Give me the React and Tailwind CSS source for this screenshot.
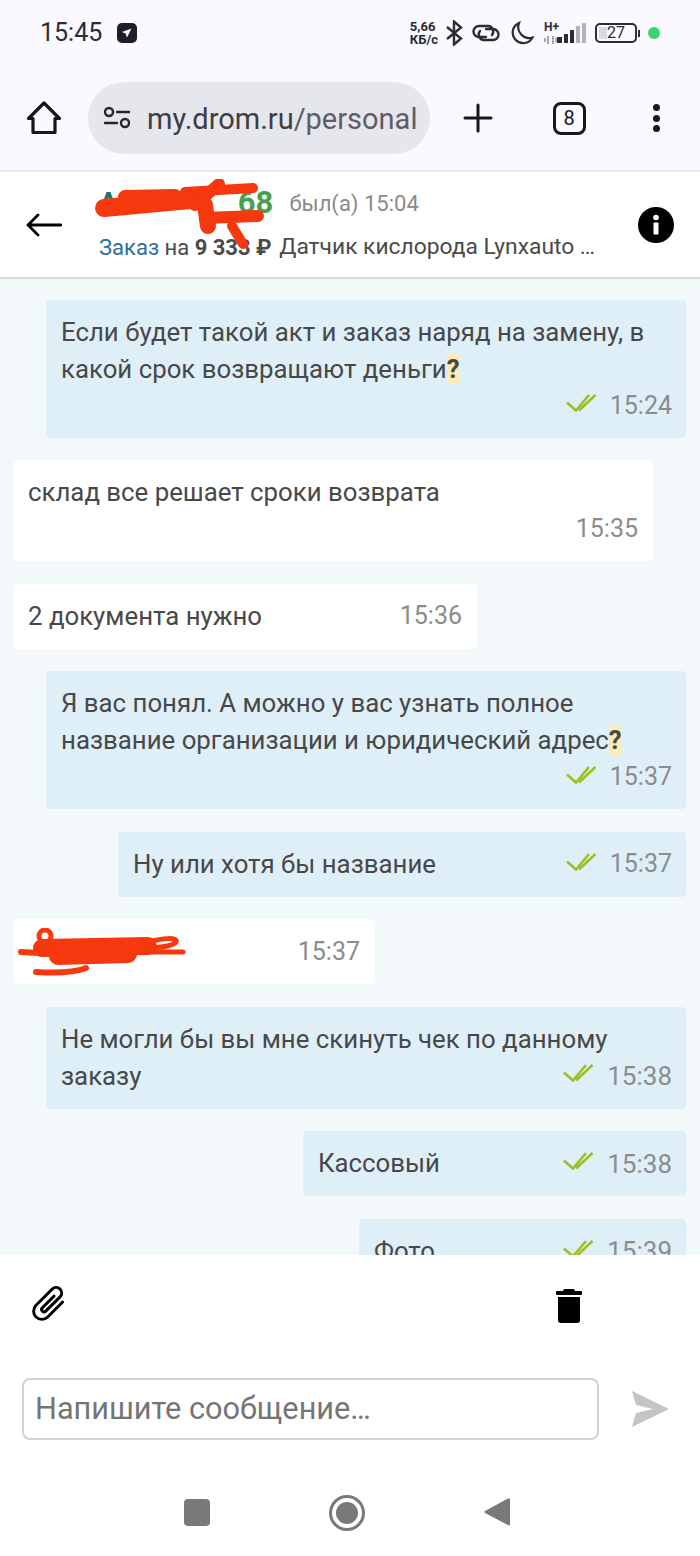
import React from "react";

const Checks = () => (
  <svg width="30" height="18" viewBox="0 0 30 18" fill="none" stroke="#9dbf1f" strokeWidth="2.6" className="-mt-[5px] shrink-0">
    <path d="M1 8.500l9 8L23 1" />
    <path d="M13 16.500L29.500 1" />
  </svg>
);

const Meta = ({ time, own = true, big = false, className = "" }) => (
  <div
    className={`flex items-center gap-[14px] leading-[36px] text-[#8c8c8c] ${
      big ? "text-[26px]" : "text-[25px]"
    } ${className}`}
  >
    {own && <Checks />}
    <span>{time}</span>
  </div>
);

const Q = () => <span className="bg-[#fdecb8] font-bold">?</span>;

const Bubble = ({ own = true, width, children }) => (
  <div
    className={`shrink-0 rounded-[4px] py-[14px] text-[25.8px] leading-[37px] text-[#484848] ${width} ${
      own ? "self-end bg-[#dfeff8] pl-[15px] pr-[14px]" : "self-start bg-white pl-[14px] pr-[15px]"
    }`}
  >
    {children}
  </div>
);

const Row = ({ text, time, own, big }) => (
  <div className="flex items-center justify-between">
    <span>{text}</span>
    <Meta time={time} own={own} big={big} />
  </div>
);

const StatusBar = () => (
  <div className="flex h-[70px] items-center justify-between pb-[4px] pl-[40px] pr-[40px] text-[#2b2d33]">
    <div className="flex items-center gap-[15px]">
      <span className="text-[25px]">15:45</span>
      <svg width="20" height="20" viewBox="0 0 20 20">
        <rect width="20" height="20" rx="5" fill="#1b1e2b" />
        <path d="M14.500 5.500L5 9l3.600 1.400L10 14.500z" fill="#fff" />
      </svg>
    </div>
    <div className="flex items-center">
      <div className="flex flex-col text-[13px] font-bold leading-[13px]">
        <span>5,66</span>
        <span>КБ/с</span>
      </div>
      <svg className="ml-[7px]" width="18" height="26" viewBox="0 0 18 26" fill="none" stroke="#2b2d33" strokeWidth="2.4">
        <path d="M2 7l14 11.500L9 24.500V1.500l7 6L2 19" />
      </svg>
      <svg className="ml-[8px]" width="30" height="22" viewBox="0 0 30 22" fill="none" stroke="#2b2d33" strokeWidth="2.4" strokeLinecap="round">
        <path d="M15 15H8a5.500 5.500 0 0 1 0-11H17a5.500 5.500 0 0 1 4 9" />
        <path d="M15 7h7a5.500 5.500 0 0 1 0 11H13a5.500 5.500 0 0 1-4-9" />
      </svg>
      <svg className="ml-[9px]" width="24" height="24" viewBox="0 0 24 24" fill="none" stroke="#2b2d33" strokeWidth="2.2">
        <path d="M9 2a10.500 10.500 0 1 0 13.500 14.500A11 11 0 0 1 9 2z" />
      </svg>
      <div className="ml-[10px] flex h-[22px] w-[14px] flex-col justify-between">
        <span className="text-[12px] font-bold leading-[10px]">H+</span>
        <svg width="14" height="8" viewBox="0 0 14 8" fill="#a9a9ae">
          <rect x="0" y="2" width="2" height="4" />
          <rect x="3" y="0" width="2" height="8" />
          <rect x="8" y="0" width="2" height="8" />
          <rect x="11" y="2" width="2" height="4" />
        </svg>
      </div>
      <svg className="ml-[-1px]" width="30" height="20" viewBox="0 0 30 20">
        <rect x="0" y="14" width="5" height="6" fill="#2b2d33" />
        <rect x="7" y="11" width="4" height="9" fill="#2b2d33" />
        <rect x="13" y="7" width="4" height="13" fill="#2b2d33" />
        <rect x="19" y="3" width="4" height="17" fill="#b4b4b8" />
        <rect x="25" y="0" width="4" height="20" fill="#b4b4b8" />
      </svg>
      <div className="ml-[8px] flex items-center">
        <div className="relative flex h-[20px] w-[42px] items-center justify-center overflow-hidden rounded-[5px] border-2 border-[#2b2d33] text-[16px] leading-none">
          <div className="absolute inset-y-[2px] left-[2px] w-[8px] bg-[#d9d9de]" />
          <span className="relative">27</span>
        </div>
        <div className="ml-[1px] h-[7px] w-[2px] bg-[#2b2d33]" />
      </div>
      <div className="ml-[8px] h-[12px] w-[12px] rounded-full bg-[#3ed16f]" />
    </div>
  </div>
);

const Toolbar = () => (
  <div className="flex h-[100px] items-start pt-[12px]">
    <div className="flex h-[72px] w-[88px] items-center justify-center">
      <svg width="36" height="36" viewBox="0 0 36 36" fill="none" stroke="#16181d" strokeWidth="3.200" strokeLinejoin="round">
        <path d="M2.500 18.500L18 3l15.500 15.500H29V32.500H7V18.500z" />
      </svg>
    </div>
    <div className="flex h-[72px] w-[342px] items-center rounded-full bg-[#e6e6ed] pl-[15px]">
      <svg width="28" height="24" viewBox="0 0 28 24" fill="none" stroke="#24262b" strokeWidth="2.400" strokeLinecap="round">
        <circle cx="6" cy="6" r="4" />
        <path d="M14 6h12" />
        <path d="M2 17h12" />
        <circle cx="22" cy="17" r="4" />
      </svg>
      <span className="ml-[16px] mt-[3px] text-[29px] whitespace-nowrap text-[#3c3e45]">
        my.drom.ru<span className="text-[#5c5e66]">/personal</span>
      </span>
    </div>
    <div className="flex h-[72px] w-[96px] items-center justify-center">
      <svg width="30" height="30" viewBox="0 0 30 30" stroke="#16181d" strokeWidth="3" strokeLinecap="round">
        <path d="M15 2v26M2 15h26" />
      </svg>
    </div>
    <div className="flex h-[72px] w-[86px] items-center justify-center">
      <div className="flex h-[33px] w-[33px] items-center justify-center rounded-[8px] border-[3px] border-[#16181d] text-[20px] text-[#16181d]">
        8
      </div>
    </div>
    <div className="flex h-[72px] w-[88px] flex-col items-center justify-center gap-[3.500px]">
      <div className="h-[7px] w-[7px] rounded-full bg-[#16181d]" />
      <div className="h-[7px] w-[7px] rounded-full bg-[#16181d]" />
      <div className="h-[7px] w-[7px] rounded-full bg-[#16181d]" />
    </div>
  </div>
);

const ChatHeader = () => (
  <div className="relative flex h-[109px] shrink-0 items-center border-y-2 border-t-[#e8e8ee] border-b-[#d9d9d9] bg-white pl-[26px] pr-[26px]">
    <svg width="36" height="24" viewBox="0 0 36 24" fill="none" stroke="#000" strokeWidth="2.800" strokeLinecap="round" strokeLinejoin="round" className="shrink-0">
      <path d="M35 12H2M12 2L2 12l10 10" />
    </svg>
    <div className="ml-[37px] flex min-w-0 flex-1 flex-col">
      <div className="-mt-[4px] flex h-[44px] items-center">
        <span className="text-[28px] font-bold text-[#1f7560]">А</span>
        <span className="ml-[120px] text-[31px] font-bold text-[#4a9f4e]">68</span>
        <span className="ml-[16px] text-[22px] text-[#8a8a8a]">был(а) 15:04</span>
      </div>
      <div className="mt-[5px] flex h-[34px] items-center whitespace-pre text-[22px] text-[#4a4a4a]">
        <span className="text-[#2a70a0]">Заказ</span>
        <span> на </span>
        <span className="font-bold">9 333 ₽</span>
        <span className="ml-[2px] text-[22.8px]"> Датчик кислорода Lynxauto …</span>
      </div>
    </div>
    <svg width="36" height="36" viewBox="0 0 36 36" className="shrink-0">
      <circle cx="18" cy="18" r="18" fill="#000" />
      <circle cx="18" cy="10.500" r="2.800" fill="#fff" />
      <rect x="15.500" y="15.500" width="5" height="12" rx="1" fill="#fff" />
    </svg>
    <svg width="180" height="80" viewBox="0 0 180 80" fill="none" stroke="#f6380f" strokeLinecap="round" strokeLinejoin="round" className="absolute left-[92px] top-[7px]">
      <path d="M12 29L98 21" strokeWidth="18" />
      <path d="M33 18L83 17" strokeWidth="14" />
      <path d="M103 26L127 5" strokeWidth="12" />
      <path d="M93 13L161 9" strokeWidth="10" />
      <path d="M113 39L166 37" strokeWidth="12" />
      <path d="M113 26L116 47" strokeWidth="16" />
      <path d="M140 47L151 65" strokeWidth="10" />
    </svg>
  </div>
);

const Messages = () => (
  <div className="flex min-h-0 flex-1 flex-col gap-[22.500px] overflow-hidden bg-[#f3f8fb] px-[14px] pt-[20.800px]">
    <Bubble width="w-[640px]">
      <div>Если будет такой акт и заказ наряд на замену, в</div>
      <div>какой срок возвращают деньги<Q /></div>
      <Meta time="15:24" className="justify-end" />
    </Bubble>
    <Bubble own={false} width="w-[639px]">
      <div>склад все решает сроки возврата</div>
      <Meta time="15:35" own={false} className="justify-end" />
    </Bubble>
    <Bubble own={false} width="w-[463px]">
      <Row text="2 документа нужно" time="15:36" own={false} />
    </Bubble>
    <Bubble width="w-[640px]">
      <div>Я вас понял. А можно у вас узнать полное</div>
      <div>название организации и юридический адрес<Q /></div>
      <Meta time="15:37" className="justify-end" />
    </Bubble>
    <Bubble width="w-[568px]">
      <Row text="Ну или хотя бы название" time="15:37" />
    </Bubble>
    <Bubble own={false} width="w-[361px]">
      <div className="flex h-[37px] items-center justify-between">
        <svg width="168" height="48" viewBox="0 0 168 48" fill="none" stroke="#f6380f" strokeLinecap="round" strokeLinejoin="round" className="-ml-[10px] shrink-0">
          <path d="M24 20L130 18" strokeWidth="18" />
          <path d="M40 28L110 26" strokeWidth="18" />
          <path d="M3 24L40 26" strokeWidth="6" />
          <path d="M105 24L165 24" strokeWidth="5" />
          <path d="M130 14C145 10 160 9 158 14C155 18 140 20 130 20" strokeWidth="5" />
          <path d="M18 44C35 45 55 45 68 40" strokeWidth="6" />
          <circle cx="27" cy="8" r="6" strokeWidth="5" />
        </svg>
        <Meta time="15:37" own={false} />
      </div>
    </Bubble>
    <Bubble width="w-[640px]">
      <div>Не могли бы вы мне скинуть чек по данному</div>
      <Meta time="15:38" big className="float-right" />
      <div>заказу</div>
    </Bubble>
    <Bubble width="w-[383px]">
      <Row text="Кассовый" time="15:38" big />
    </Bubble>
    <Bubble width="w-[327px]">
      <Row text="Фото" time="15:39" big />
    </Bubble>
  </div>
);

const Composer = () => (
  <div className="shrink-0 bg-white">
    <div className="flex h-[123px] items-start justify-between pl-[27px] pr-[118px] pt-[27px]">
      <svg width="44" height="44" viewBox="0 0 24 24" fill="none" stroke="#000" strokeWidth="1.600" strokeLinecap="round">
        <path transform="rotate(45 12 12)" d="M16.500 6v11.500a4.500 4.500 0 0 1-9 0V5a3 3 0 0 1 6 0v11a1.300 1.300 0 0 1-2.600 0V7" />
      </svg>
      <svg width="26" height="34" viewBox="0 0 26 34" fill="#000" className="mt-[7px]">
        <path d="M9 0h8a2 2 0 0 1 2 2h6a1 1 0 0 1 1 1v2a1 1 0 0 1-1 1H1a1 1 0 0 1-1-1V3a1 1 0 0 1 1-1h6a2 2 0 0 1 2-2z" />
        <path d="M2 8h22v23a3 3 0 0 1-3 3H5a3 3 0 0 1-3-3z" />
      </svg>
    </div>
    <div className="flex items-center pl-[22px] pr-[31px]">
      <div className="flex h-[62px] w-[577px] items-center rounded-[8px] border-2 border-[#d2d2d2] pl-[11px] text-[30.700px] text-[#757575]">
        Напишите сообщение…
      </div>
      <svg width="38" height="38" viewBox="0 0 38 38" fill="#c4c4c4" className="ml-auto">
        <path d="M1 1l37 18L1 37l4-14 17-4-17-4z" />
      </svg>
    </div>
    <div className="flex h-[116px] items-start pl-[184px] pt-[57px]">
      <div className="mt-[2px] h-[27px] w-[26px] rounded-[4px] bg-[#797979]" />
      <div className="ml-[119px] flex h-[36px] w-[36px] -translate-y-[2px] items-center justify-center rounded-full border-[3px] border-[#797979]">
        <div className="h-[22px] w-[22px] rounded-full bg-[#797979]" />
      </div>
      <svg width="26" height="30" viewBox="0 0 26 30" fill="#797979" className="ml-[119px]">
        <path d="M25 1.500a1 1 0 0 1 1 1v25a1 1 0 0 1-1.600.700L1 16a1.400 1.400 0 0 1 0-2L24 1.500z" />
      </svg>
    </div>
  </div>
);

export default function App() {
  return (
    <div className="flex h-[1556px] w-[700px] flex-col overflow-hidden bg-[#f9f9ff] font-['Roboto',sans-serif]">
      <StatusBar />
      <Toolbar />
      <ChatHeader />
      <Messages />
      <Composer />
    </div>
  );
}
